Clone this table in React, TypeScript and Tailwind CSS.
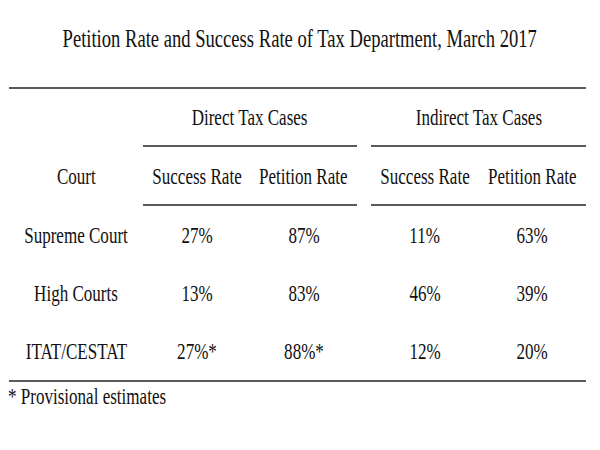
import React from "react";

// Condensed serif look: Liberation Serif squeezed horizontally
const Txt = ({ children, left = false }: { children: React.ReactNode; left?: boolean }) => (
  <span
    className={`inline-block whitespace-nowrap font-['Liberation_Serif',serif] scale-x-[0.71] ${left ? "origin-left" : "origin-center"}`}
  >
    {children}
  </span>
);

const Cell = ({ children }: { children: React.ReactNode }) => (
  <div className="flex items-center justify-center">
    <Txt>{children}</Txt>
  </div>
);

const rows = [
  { court: "Supreme Court", vals: ["27%", "87%", "11%", "63%"] },
  { court: "High Courts", vals: ["13%", "83%", "46%", "39%"] },
  { court: "ITAT/CESTAT", vals: ["27%*", "88%*", "12%", "20%"] },
];

const cols = "grid grid-cols-[134px_107px_107px_14px_107px_108px]";

export default function App() {
  return (
    <div className="w-[600px] h-[450px] bg-white text-[#111] overflow-hidden font-['Liberation_Serif',serif]">
      {/* Title */}
      <div className="pt-[26px] flex justify-center text-[26px] leading-none">
        <span className="inline-block whitespace-nowrap scale-x-[0.715] origin-center">
          Petition Rate and Success Rate of Tax Department, March 2017
        </span>
      </div>

      <div className="ml-[9px] w-[577px] mt-[35px] text-[24px] leading-none">
        <div className="h-[2px] bg-[#5a5a5a]" />

        {/* Group headers */}
        <div className={`${cols} h-[56px]`}>
          <div />
          <div className="col-span-2 flex items-center justify-center">
            <Txt>Direct Tax Cases</Txt>
          </div>
          <div />
          <div className="col-span-2 flex items-center justify-center">
            <Txt>Indirect Tax Cases</Txt>
          </div>
        </div>

        <div className={`${cols} h-[2px]`}>
          <div />
          <div className="col-span-2 bg-[#5a5a5a]" />
          <div />
          <div className="col-span-2 bg-[#5a5a5a]" />
        </div>

        {/* Column headers */}
        <div className={`${cols} h-[57px]`}>
          <Cell>Court</Cell>
          <Cell>Success Rate</Cell>
          <Cell>Petition Rate</Cell>
          <div />
          <Cell>Success Rate</Cell>
          <Cell>Petition Rate</Cell>
        </div>

        <div className={`${cols} h-[2px]`}>
          <div />
          <div className="col-span-2 bg-[#5a5a5a]" />
          <div />
          <div className="col-span-2 bg-[#5a5a5a]" />
        </div>

        {/* Data rows */}
        {rows.map((r) => (
          <div key={r.court} className={`${cols} h-[58px]`}>
            <Cell>{r.court}</Cell>
            <Cell>{r.vals[0]}</Cell>
            <Cell>{r.vals[1]}</Cell>
            <div />
            <Cell>{r.vals[2]}</Cell>
            <Cell>{r.vals[3]}</Cell>
          </div>
        ))}

        <div className="h-[2px] bg-[#5a5a5a]" />

        {/* Footnote */}
        <div className="pt-[2px] -ml-[1px]">
          <Txt left>* Provisional estimates</Txt>
        </div>
      </div>
    </div>
  );
}
